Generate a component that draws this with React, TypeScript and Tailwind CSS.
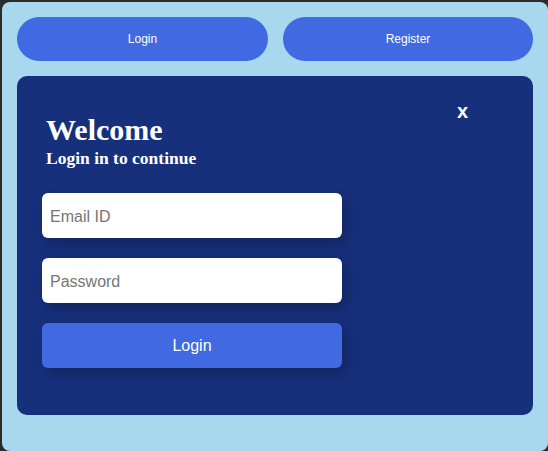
import React from "react";

export default function App() {
  return (
    <div className="w-[548px] h-[451px] bg-[#2b2b2b] pt-[2px] pl-[2px] overflow-hidden" style={{ fontFamily: '"Liberation Sans", Arial, sans-serif' }}>
      <div className="w-[546px] h-[449px] bg-[#a7d8ee] rounded-[8px] p-[15px] flex flex-col gap-[15px]">
        <div className="flex gap-[15px]">
          <button className="w-[251px] h-[44px] rounded-full bg-[#4169e1] text-white text-[12px]">Login</button>
          <button className="w-[250px] h-[44px] rounded-full bg-[#4169e1] text-white text-[12px]">Register</button>
        </div>
        <div className="relative w-[516px] h-[339px] rounded-[10px] bg-[#17307c] pt-[37px] px-[25px]">
          <span className="absolute left-[440px] top-[23px] text-white font-bold text-[20px] leading-[24px]">x</span>
          <div className="pl-[4px] text-white font-bold" style={{ fontFamily: '"Liberation Serif", "Times New Roman", serif' }}>
            <h1 className="text-[30px] leading-[34.5px]">Welcome</h1>
            <h2 className="text-[17.5px] leading-[20px]">Login in to continue</h2>
          </div>
          <div className="mt-[25px] flex flex-col gap-[20px] w-[300px]">
            <input
              placeholder="Email ID"
              className="h-[45px] rounded-[6px] bg-white pl-[8px] pr-[8px] pt-[3px] text-[16px] placeholder:text-[#767676] outline-none shadow-[4px_6px_14px_rgba(0,0,0,0.25)]"
            />
            <input
              type="password"
              placeholder="Password"
              className="h-[45px] rounded-[6px] bg-white pl-[8px] pr-[8px] pt-[3px] text-[16px] placeholder:text-[#767676] outline-none shadow-[4px_6px_14px_rgba(0,0,0,0.25)]"
            />
            <button className="h-[45px] rounded-[6px] bg-[#4169e1] text-white text-[16px] pt-[2px] shadow-[4px_6px_14px_rgba(0,0,0,0.25)]">Login</button>
          </div>
        </div>
      </div>
    </div>
  );
}
